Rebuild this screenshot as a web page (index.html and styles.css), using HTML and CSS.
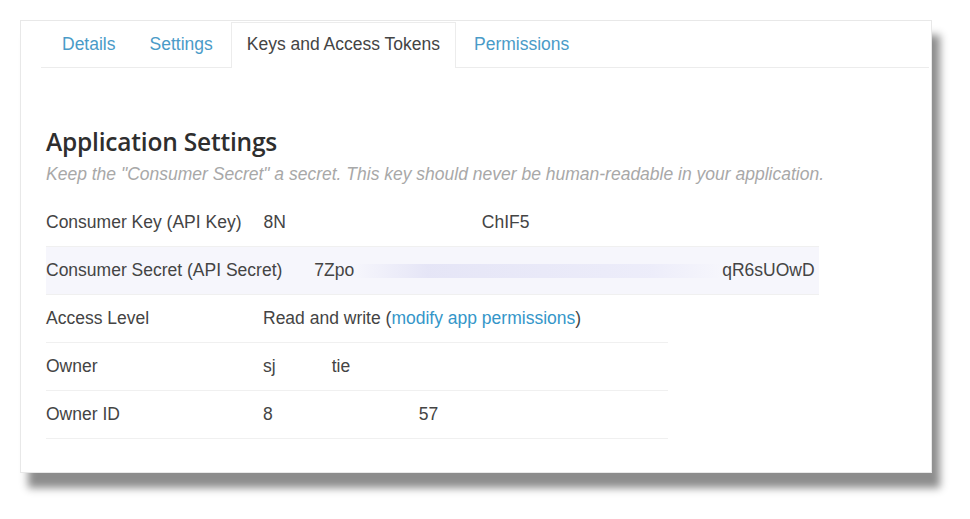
FILE: index.html
```html
<!DOCTYPE html>
<html lang="en">
<head>
    <meta charset="UTF-8">
    <title>Keys and Access Tokens</title>
    <link rel="stylesheet" href="styles.css">
</head>
<body>

    <div class="card">
        <ul class="tabs">
            <li><a href="#">Details</a></li>
            <li><a href="#">Settings</a></li>
            <li class="active"><a href="#">Keys and Access Tokens</a></li>
            <li><a href="#">Permissions</a></li>
        </ul>

        <div class="content">
            <h2>Application Settings</h2>
            <p class="hint">Keep the "Consumer Secret" a secret. This key should never be human-readable in your application.</p>

            <div class="rows">
                <div class="row wide">
                    <span class="label">Consumer Key (API Key)</span>
                    <span class="value">8N<span class="redacted r-key"></span>ChIF5</span>
                </div>
                <div class="row wide shaded">
                    <span class="label long">Consumer Secret (API Secret)</span>
                    <span class="value">7Zpo<span class="redacted r-secret blur"></span>qR6sUOwD</span>
                </div>
                <div class="row">
                    <span class="label">Access Level</span>
                    <span class="value">Read and write (<a href="#">modify app permissions</a>)</span>
                </div>
                <div class="row">
                    <span class="label">Owner</span>
                    <span class="value">sj<span class="redacted r-owner"></span>tie</span>
                </div>
                <div class="row">
                    <span class="label">Owner ID</span>
                    <span class="value">8<span class="redacted r-id"></span>57</span>
                </div>
            </div>
        </div>
    </div>

</body>
</html>
```

FILE: styles.css
```css
body {
    margin: 0;
    padding: 20px 0 0 20px;
    min-height: 519px;
    box-sizing: border-box;
    background: #fff;
    font-family: "Liberation Sans", Arial, sans-serif;
    font-size: 17.5px;
    color: #444;
}
a {
    color: #3496c9;
    text-decoration: none;
}
.card {
    width: 912px;
    height: 453px;
    background: #fff;
    border: 1px solid #e8e8e8;
    box-shadow: 8px 15px 8px rgba(0,0,0,0.45);
    box-sizing: border-box;
    padding: 1px 0 0 20px;
}
.tabs {
    list-style: none;
    margin: 0 2px 0 0;
    padding: 0 0 0 5px;
    display: flex;
    height: 45px;
    border-bottom: 1px solid #ececec;
}
.tabs li {
    margin-right: 2px;
    border: 1px solid transparent;
    border-bottom: none;
}
.tabs a {
    display: block;
    padding: 11px 15px 0;
    height: 34px;
    color: #4a9bc8;
}
.tabs .active {
    border-color: #ececec;
    background: #fff;
    margin-bottom: -1px;
}
.tabs .active a {
    color: #444;
    height: 35px;
}
.content {
    padding: 0 0 0 5px;
}
h2 {
    margin: 59px 0 0;
    font-family: "Open Sans", sans-serif;
    font-weight: 600;
    font-size: 24.5px;
    line-height: 30px;
    color: #2e2e2e;
    letter-spacing: -0.2px;
}
.hint {
    margin: 5px 0 0;
    font-style: italic;
    font-size: 17.5px;
    line-height: 24px;
    color: #a8a8a8;
}
.rows {
    margin-top: 13px;
}
.row {
    display: flex;
    align-items: center;
    width: 622px;
    height: 48px;
    border-bottom: 1px solid #f0f0f0;
    box-sizing: border-box;
}
.row.wide {
    width: 773px;
}
.row.shaded {
    background: #f6f6fc;
}
.label {
    min-width: 195px;
    margin-right: 22px;
}
.label.long {
    margin-right: 32px;
}
.redacted {
    display: inline-block;
    height: 14px;
    vertical-align: middle;
}
.r-key { width: 196px; }
.r-secret { width: 368px; }
.r-owner { width: 56px; }
.r-id { width: 146px; }
.blur {
    background: linear-gradient(90deg, rgba(225,225,245,0) 0%, rgba(225,225,245,0.8) 20%, rgba(230,230,248,0.6) 80%, rgba(230,230,248,0) 100%);
}
```
